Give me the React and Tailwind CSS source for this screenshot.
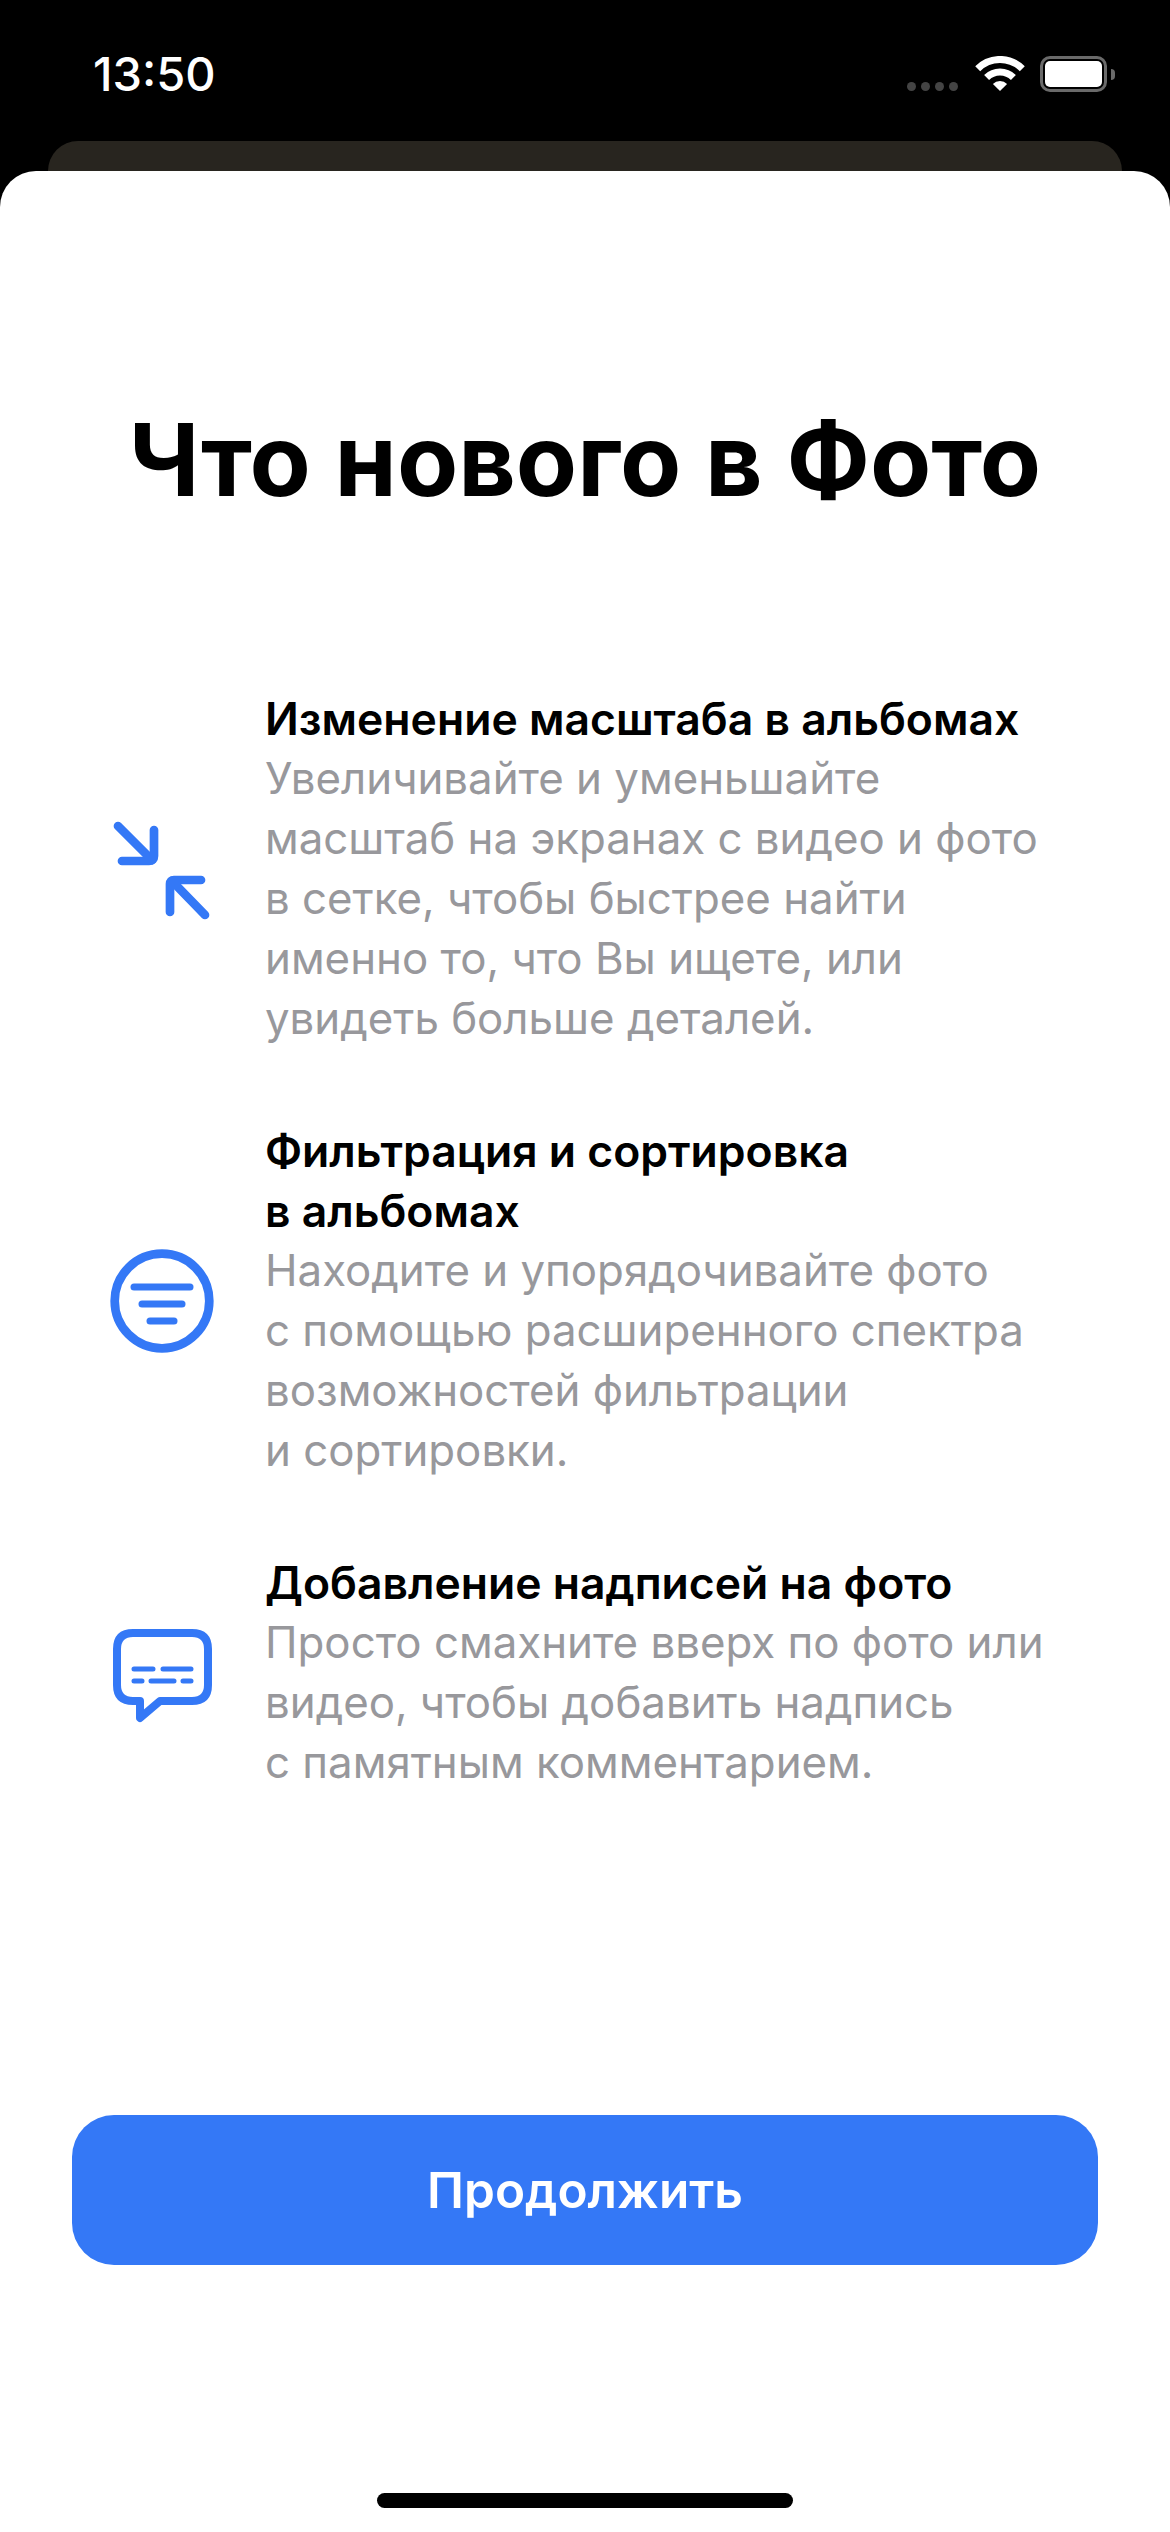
import React from 'react';

const features = [
  {
    icon: 'zoom',
    title: ['Изменение масштаба в альбомах'],
    lines: ['Увеличивайте и уменьшайте', 'масштаб на экранах с видео и фото', 'в сетке, чтобы быстрее найти', 'именно то, что Вы ищете, или', 'увидеть больше деталей.'],
  },
  {
    icon: 'filter',
    title: ['Фильтрация и сортировка', 'в альбомах'],
    lines: ['Находите и упорядочивайте фото', 'с помощью расширенного спектра', 'возможностей фильтрации', 'и сортировки.'],
  },
  {
    icon: 'caption',
    title: ['Добавление надписей на фото'],
    lines: ['Просто смахните вверх по фото или', 'видео, чтобы добавить надпись', 'с памятным комментарием.'],
  },
];

const ZoomIcon = () => (
  <svg width="150" height="150" viewBox="0 0 150 150" fill="none" stroke="#3478f6" strokeWidth="8.7" strokeLinecap="round" strokeLinejoin="round">
    <path d="M28 32 L62 66" />
    <path d="M64 36 V62 Q64 67 59 67 H32" />
    <path d="M115 121 L82 87" />
    <path d="M80 118 V90 Q80 86 84 86 H111" />
  </svg>
);

const FilterIcon = () => (
  <svg width="150" height="150" viewBox="0 0 150 150" fill="none" stroke="#3478f6" strokeLinecap="round">
    <circle cx="72" cy="75" r="47.3" strokeWidth="8.7" />
    <path d="M44 61 H100" strokeWidth="7" />
    <path d="M52 78 H92" strokeWidth="7" />
    <path d="M60 95 H84" strokeWidth="7" />
  </svg>
);

const CaptionIcon = () => (
  <svg width="150" height="130" viewBox="0 0 150 130" fill="none" stroke="#3478f6" strokeLinecap="round" strokeLinejoin="round">
    <path d="M43 25 H102 Q118 25 118 41 V77 Q118 93 102 93 H70 L50 110 V93 H43 Q27 93 27 77 V41 Q27 25 43 25 Z" strokeWidth="8" />
    <path d="M44 61 H63 M73 61 H101" strokeWidth="5" />
    <path d="M44 73 H52 M61 73 H84 M93 73 H101" strokeWidth="5" />
  </svg>
);

const icons = { zoom: ZoomIcon, filter: FilterIcon, caption: CaptionIcon };

const Feature = ({ icon, title, lines }) => {
  const Icon = icons[icon];
  return (
    <div className="flex items-center">
      <div className="w-[150px] ml-[90px] mr-[25px] shrink-0 flex justify-center">
        <Icon />
      </div>
      <div className="text-[43.8px] leading-[60px]">
        {title.map((t) => (
          <div key={t} className="text-[44.5px] font-semibold text-black whitespace-nowrap">{t}</div>
        ))}
        {lines.map((l) => (
          <div key={l} className="text-[#98989c] whitespace-nowrap">{l}</div>
        ))}
      </div>
    </div>
  );
};

export default function App() {
  return (
    <div className="w-[1170px] h-[2532px] bg-black flex flex-col overflow-hidden font-['Inter',sans-serif]">
      <div className="h-[141px] shrink-0 flex justify-between pl-[93px] pr-[55px] pt-[46px] text-white">
        <div className="text-[47px] leading-[56px] font-medium">13:50</div>
        <div className="flex items-start pt-[10px]">
          <div className="flex gap-[5px] pt-[26px] mr-[17px]">
            <span className="w-[9px] h-[9px] rounded-full bg-[#444]" />
            <span className="w-[9px] h-[9px] rounded-full bg-[#444]" />
            <span className="w-[9px] h-[9px] rounded-full bg-[#444]" />
            <span className="w-[9px] h-[9px] rounded-full bg-[#444]" />
          </div>
          <svg width="50" height="36" viewBox="0 0 50 36" fill="none" className="mr-[15px]">
            <path d="M2.7 12.7 A31.5 31.5 0 0 1 47.3 12.7" stroke="#fff" strokeWidth="7" />
            <path d="M11.6 21.6 A19 19 0 0 1 38.4 21.6" stroke="#fff" strokeWidth="7" />
            <path d="M17.9 27.9 A10 10 0 0 1 32.1 27.9 L25 35 Z" fill="#fff" />
          </svg>
          <div className="flex items-center">
            <div className="w-[67px] h-[36px] rounded-[10px] border-[3px] border-[#6a6a6a] p-[2px]">
              <div className="w-full h-full rounded-[5px] bg-white" />
            </div>
            <div className="w-[4px] h-[11px] rounded-r-full bg-[#6a6a6a] ml-[4px]" />
          </div>
        </div>
      </div>
      <div className="h-[30px] shrink-0 mx-[48px] rounded-t-[30px] bg-[#28251f]" />
      <div className="flex-1 bg-white rounded-t-[36px] flex flex-col">
        <h1 className="mt-[234px] text-center text-[100px] leading-[110px] font-bold text-black">Что нового в Фото</h1>
        <div className="mt-[174px] flex flex-col gap-[72px]">
          {features.map((f) => (
            <Feature key={f.icon} {...f} />
          ))}
        </div>
        <button className="mt-auto mx-[72px] h-[150px] rounded-[42px] bg-[#3478f6] text-white text-[49.5px] font-semibold">Продолжить</button>
        <div className="mt-[228px] mb-[24px] mx-auto w-[416px] h-[15px] rounded-full bg-black" />
      </div>
    </div>
  );
}
